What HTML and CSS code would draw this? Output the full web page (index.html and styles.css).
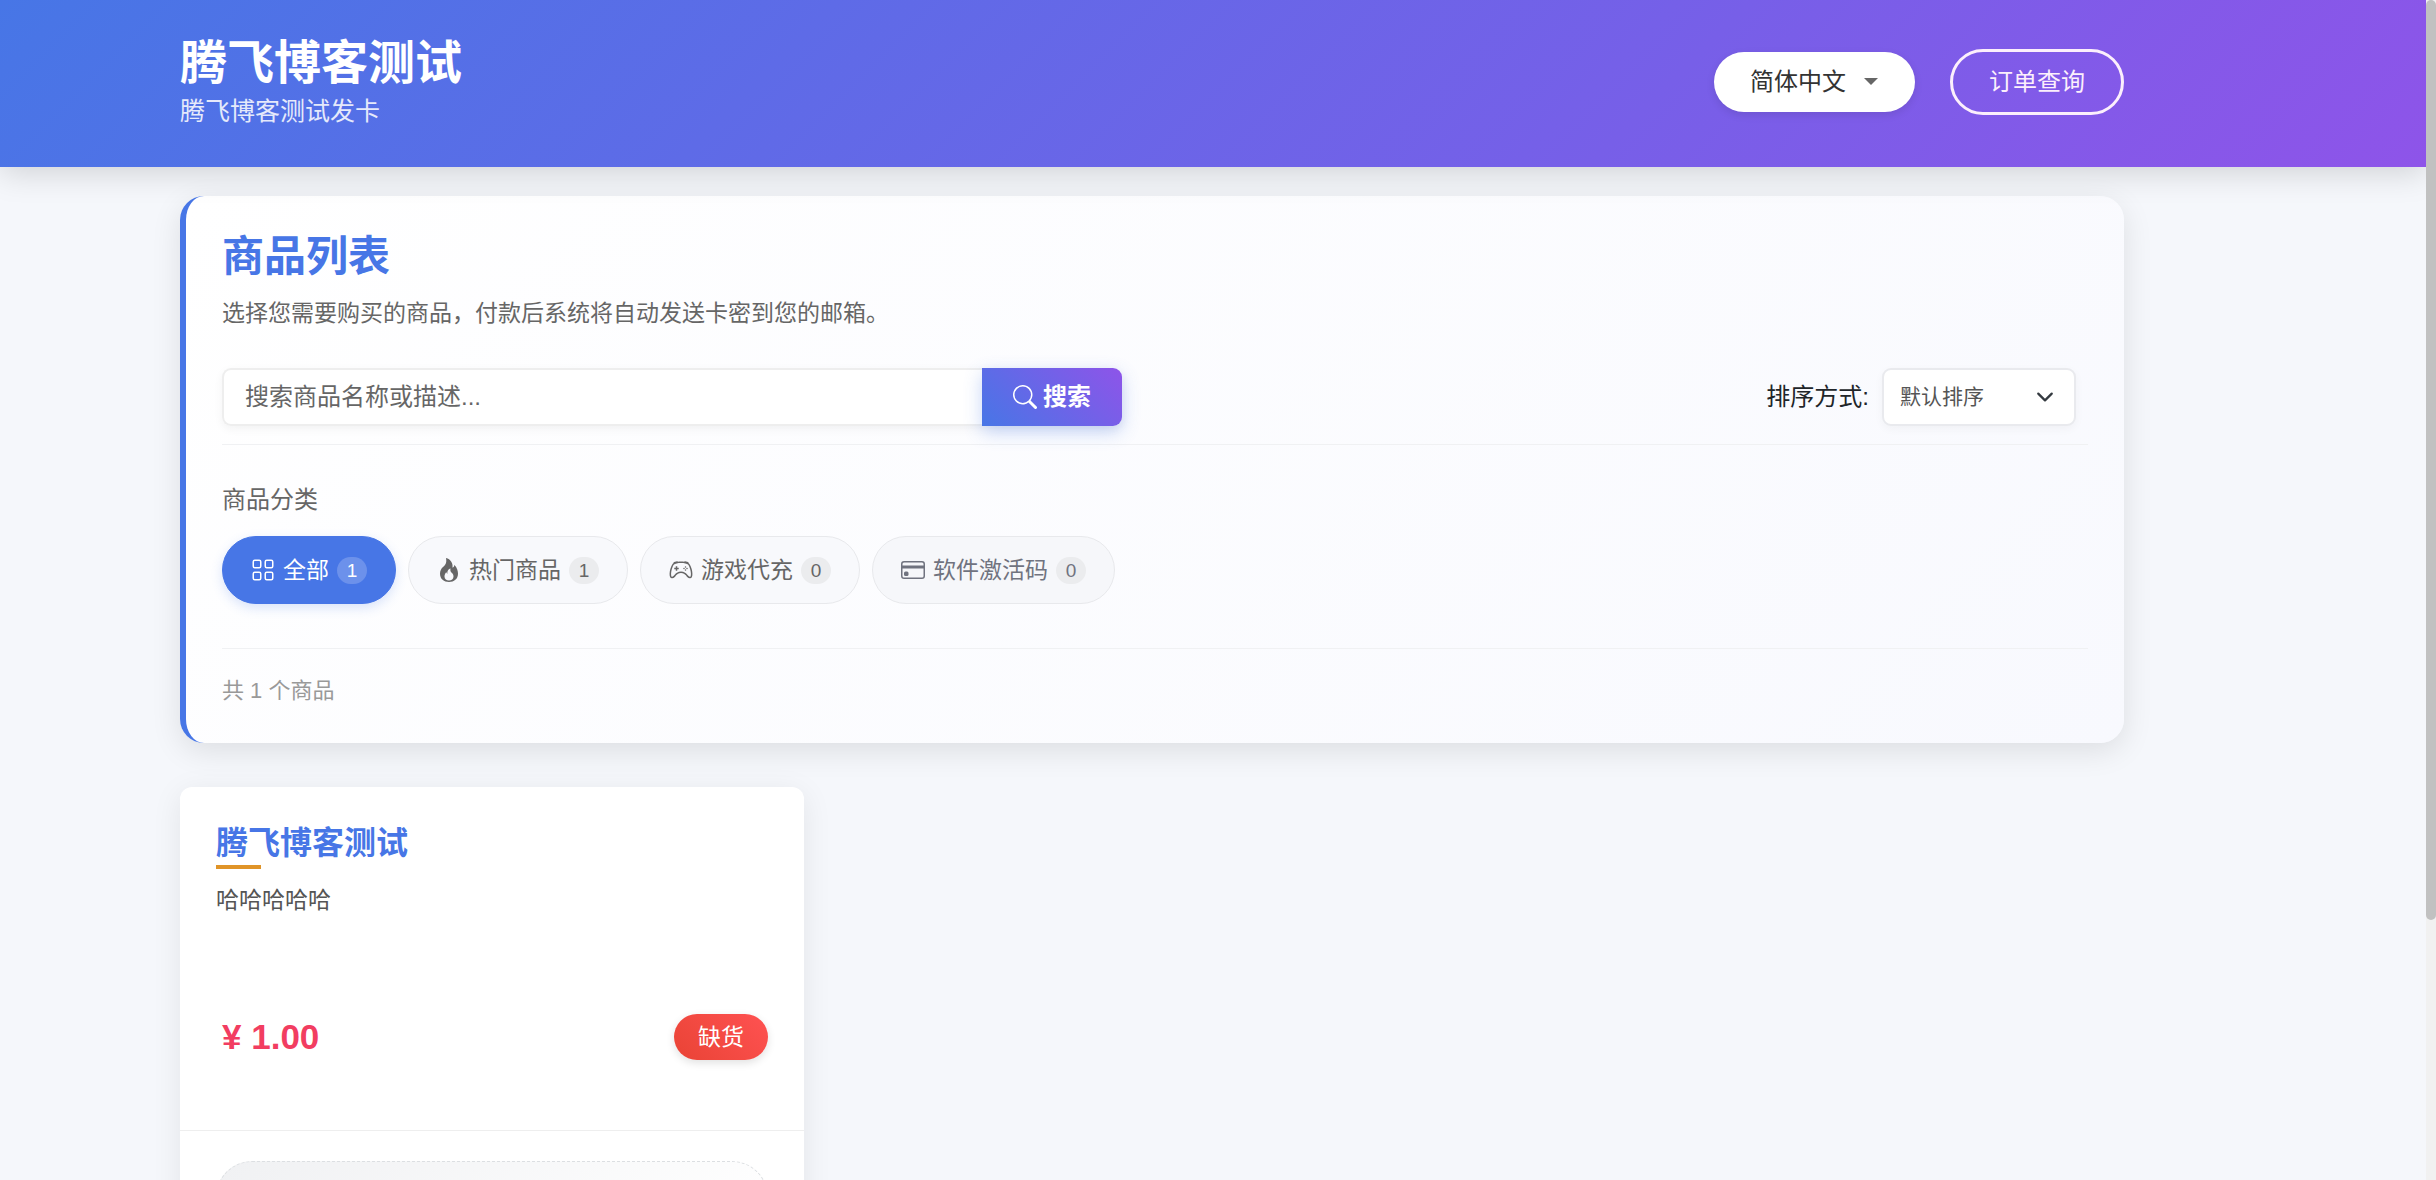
FILE: index.html
```html
<!DOCTYPE html>
<html lang="zh-CN">
<head>
    <meta charset="UTF-8">
    <title>腾飞博客测试</title>
    <link rel="stylesheet" href="styles.css">
</head>
<body>
<header class="header">
    <div class="brand">
        <h1>腾飞博客测试</h1>
        <p>腾飞博客测试发卡</p>
    </div>
    <div class="header-btns">
        <button class="lang" type="button">简体中文
            <svg class="caret" viewBox="0 0 14 7"><path d="M0 0h14L7 7z"/></svg>
        </button>
        <a class="order" href="#">订单查询</a>
    </div>
</header>

<main class="main">
    <section class="panel">
        <h2>商品列表</h2>
        <p class="desc">选择您需要购买的商品，付款后系统将自动发送卡密到您的邮箱。</p>
        <div class="tools">
            <form class="search">
                <input type="text" placeholder="搜索商品名称或描述..." aria-label="搜索商品">
                <button type="button">
                    <svg class="icon" viewBox="0 0 16 16"><path d="M11.742 10.344a6.5 6.5 0 1 0-1.397 1.398h-.001q.044.06.098.115l3.85 3.85a1 1 0 0 0 1.415-1.414l-3.85-3.85a1 1 0 0 0-.115-.1zM12 6.5a5.5 5.5 0 1 1-11 0 5.5 5.5 0 0 1 11 0"/></svg>
                    搜索
                </button>
            </form>
            <div class="sort">
                <label for="sort">排序方式:</label>
                <div class="select-box">
                    <select id="sort">
                        <option>默认排序</option>
                    </select>
                    <svg class="arrow" viewBox="0 0 16 16"><path d="M2 5l6 6 6-6"/></svg>
                </div>
            </div>
        </div>
        <div class="category">
            <p class="cate-title">商品分类</p>
            <div class="chips">
                <a class="chip active" href="#">
                    <svg class="icon line" viewBox="0 0 16 16"><rect x="1.5" y="1.5" width="5" height="5" rx="1"/><rect x="9.5" y="1.5" width="5" height="5" rx="1"/><rect x="1.5" y="9.5" width="5" height="5" rx="1"/><rect x="9.5" y="9.5" width="5" height="5" rx="1"/></svg>
                    全部<span class="num">1</span>
                </a>
                <a class="chip" href="#">
                    <svg class="icon" viewBox="0 0 16 16"><path d="M8 16c3.314 0 6-2 6-5.5 0-1.5-.5-4-2.5-6 .25 1.5-1.25 2-1.25 2C11 4 9 .5 6 0c.357 2 .5 4-2 6-1.25 1-2 2.729-2 4.5C2 14 4.686 16 8 16m0-1c-1.657 0-3-1-3-2.75 0-.75.25-2 1.25-3C6.125 10 7 10.5 7 10.5c-.375-1.25.5-3.25 2-3.5-.179 1-.25 2 1 3 .625.5 1 1.364 1 2.25C11 14 9.657 15 8 15"/></svg>
                    热门商品<span class="num">1</span>
                </a>
                <a class="chip" href="#">
                    <svg class="icon" viewBox="0 0 16 16"><path d="M11.5 6.027a.5.5 0 1 1-1 0 .5.5 0 0 1 1 0m-1.5 1.5a.5.5 0 1 0 0-1 .5.5 0 0 0 0 1m2.5-.5a.5.5 0 1 1-1 0 .5.5 0 0 1 1 0m-1.5 1.5a.5.5 0 1 0 0-1 .5.5 0 0 0 0 1m-6.5-3h1v1h1v1h-1v1h-1v-1h-1v-1h1z"/><path d="M3.051 3.26a.5.5 0 0 1 .354-.613l1.932-.518a.5.5 0 0 1 .62.39c.655-.079 1.35-.117 2.043-.117.72 0 1.443.041 2.12.126a.5.5 0 0 1 .622-.399l1.932.518a.5.5 0 0 1 .306.729q.211.136.373.297c.408.408.78 1.05 1.095 1.772.32.733.599 1.591.805 2.466s.34 1.78.364 2.606c.024.816-.059 1.602-.328 2.21a1.42 1.42 0 0 1-1.445.83c-.636-.067-1.115-.394-1.513-.773-.245-.232-.496-.526-.739-.808-.126-.148-.25-.292-.368-.423-.728-.804-1.597-1.527-3.224-1.527s-2.496.723-3.224 1.527c-.119.131-.242.275-.368.423-.243.282-.494.575-.739.808-.398.38-.877.706-1.513.773a1.42 1.42 0 0 1-1.445-.83c-.27-.608-.352-1.395-.329-2.21.024-.826.16-1.73.365-2.606.206-.875.486-1.733.805-2.466.315-.722.687-1.364 1.094-1.772a2.3 2.3 0 0 1 .433-.335l-.028-.079zm2.036.412c-.877.185-1.469.443-1.733.708-.276.276-.587.783-.885 1.465a14 14 0 0 0-.748 2.295 12.4 12.4 0 0 0-.339 2.406c-.022.755.062 1.368.243 1.776a.42.42 0 0 0 .426.24c.327-.034.61-.199.929-.502.212-.202.4-.423.615-.674.133-.156.276-.323.44-.504C4.861 9.969 5.978 9.027 8 9.027s3.139.942 3.965 1.855c.164.181.307.348.44.504.214.251.403.472.615.674.318.303.601.468.929.503a.42.42 0 0 0 .426-.241c.18-.408.265-1.02.243-1.776a12.4 12.4 0 0 0-.339-2.406 14 14 0 0 0-.748-2.295c-.298-.682-.61-1.19-.885-1.465-.264-.265-.856-.523-1.733-.708-.85-.179-1.877-.27-2.913-.27s-2.063.091-2.913.27"/></svg>
                    游戏代充<span class="num">0</span>
                </a>
                <a class="chip soft" href="#">
                    <svg class="icon" viewBox="0 0 16 16"><path d="M0 4a2 2 0 0 1 2-2h12a2 2 0 0 1 2 2v8a2 2 0 0 1-2 2H2a2 2 0 0 1-2-2zm2-1a1 1 0 0 0-1 1v1h14V4a1 1 0 0 0-1-1zm13 4H1v5a1 1 0 0 0 1 1h12a1 1 0 0 0 1-1z"/><path d="M2 10a1 1 0 0 1 1-1h1a1 1 0 0 1 1 1v1a1 1 0 0 1-1 1H3a1 1 0 0 1-1-1z"/></svg>
                    软件激活码<span class="num">0</span>
                </a>
            </div>
        </div>
        <p class="total">共 1 个商品</p>
    </section>

    <section class="goods">
        <article class="card">
            <div class="card-body">
                <h3>腾飞博客测试</h3>
                <p class="intro">哈哈哈哈哈</p>
                <div class="price-row">
                    <span class="price">¥ 1.00</span>
                    <span class="stock">缺货</span>
                </div>
            </div>
            <div class="card-foot">
                <button type="button" disabled aria-label="缺货"></button>
            </div>
        </article>
    </section>
</main>
<div class="scrollbar"><div class="thumb"></div></div>
</body>
</html>
```
FILE: styles.css
```css
*{box-sizing:border-box;}
h1,h2,h3,p{margin:0;}
body{margin:0;height:100vh;overflow:hidden;padding-right:10px;background:#f5f7fb;color:#212529;font:24px/36px "Liberation Sans","Noto Sans CJK SC",sans-serif;}
a{text-decoration:none;}
button,input,select{font:inherit;}
.icon{width:24px;height:24px;fill:currentColor;flex:none;}
.icon.line{fill:none;stroke:currentColor;}

/* 头部 */
.header{position:relative;display:flex;justify-content:space-between;align-items:center;height:167px;padding:0 302px 4px 180px;background:linear-gradient(135deg,#4776e6,#8e54e9);box-shadow:0 6px 30px rgba(0,0,0,.15);color:#fff;}
.brand h1{padding-top:2px;font-size:47px;line-height:56px;font-weight:700;}
.brand p{font-size:25px;line-height:40px;opacity:.85;}
.header-btns{display:flex;align-items:center;gap:35px;}
.lang{display:flex;align-items:center;gap:18px;height:60px;padding:0 37px 0 36px;border:0;border-radius:30px;background:#fff;color:#333;box-shadow:0 3px 8px rgba(0,0,0,.1);}
.caret{width:14px;height:7px;fill:#666;}
.order{height:66px;padding:0 36px;border:3px solid #fceffc;border-radius:33px;color:#fceffc;line-height:60px;}

/* 商品列表 */
.main{padding:29px 302px 0 180px;}
.panel{padding:36px 36px 34px;border-left:6px solid #4776e6;border-radius:24px;background:linear-gradient(135deg,#fff,#f8f9fe);box-shadow:0 8px 30px rgba(0,0,0,.1);}
.panel h2{font-size:42px;line-height:50px;color:#4776e6;}
.desc{margin-top:13px;font-size:23px;color:#666;}
.tools{display:flex;justify-content:space-between;padding:37px 12px 18px 0;border-bottom:1px solid #f0f1f3;}
.search{display:flex;width:900px;height:58px;border-radius:9px;box-shadow:0 3px 10px rgba(0,0,0,.05);}
.search input{flex:1;min-width:0;padding:0 21px;border:2px solid #eee;border-right:0;border-radius:9px 0 0 9px;background:#fff;outline:none;}
.search input::placeholder{color:#666;opacity:1;}
.search button{display:flex;align-items:center;gap:6px;padding:0 31px;border:0;border-radius:0 9px 9px 0;background:linear-gradient(45deg,#4776e6,#8e54e9);box-shadow:0 6px 18px rgba(71,118,230,.3);color:#fff;font-weight:700;}
.sort{display:flex;align-items:center;gap:13px;}
.select-box{position:relative;width:194px;}
.select-box select{width:100%;height:58px;padding:0 16px;border:2px solid #e9eaee;border-radius:9px;background:#fff;color:#555;font-size:21px;appearance:none;box-shadow:0 3px 10px rgba(0,0,0,.04);}
.arrow{position:absolute;right:22px;top:20px;width:18px;height:18px;fill:none;stroke:#343a40;stroke-width:2;stroke-linecap:round;stroke-linejoin:round;pointer-events:none;}
.category{padding:37px 0 44px;border-bottom:1px solid #f0f1f3;}
.cate-title{color:#666;}
.chips{display:flex;gap:12px;margin-top:18px;}
.chip{display:flex;align-items:center;gap:8px;height:68px;padding:0 28px;border:1px solid #e8e9ec;border-radius:34px;background:#f8f9fc;color:#666;font-size:23px;}
.chip .num{width:30px;height:27px;border-radius:14px;background:#ebecee;font-size:19px;line-height:27px;text-align:center;}
.chip.active{border-color:#4776e6;background:#4776e6;color:#fff;box-shadow:0 4px 12px rgba(71,118,230,.2);}
.chip.active .num{background:#6c91eb;}
.chip.soft{background:#f6f7fa;color:#70737f;}
.total{margin-top:24px;font-size:22px;color:#999;}

/* 商品卡片 */
.goods{display:grid;grid-template-columns:repeat(3,1fr);gap:36px;margin-top:44px;}
.card{border-radius:12px;background:#fff;box-shadow:0 6px 30px rgba(0,0,0,.08);}
.card-body{padding:36px 36px 70px;}
.card h3{font-size:32px;line-height:40px;color:#4776e6;}
.card h3::after{content:"";display:block;width:45px;height:4px;margin-top:2px;background:#e09428;}
.intro{margin-top:13px;font-size:23px;color:#555;}
.price-row{display:flex;justify-content:space-between;align-items:center;margin-top:96px;padding-left:6px;}
.price{font-size:35px;font-weight:700;color:#f23d61;}
.stock{padding:0 24px;border-radius:23px;background:linear-gradient(45deg,#e94335,#ff5252);color:#fff;font-size:23px;line-height:46px;box-shadow:0 3px 8px rgba(0,0,0,.12);}
.card-foot{padding:30px 36px 36px;border-top:1px solid #eee;}
.card-foot button{display:block;width:100%;height:72px;border:1px dashed #dcdfe2;border-radius:36px;background:linear-gradient(135deg,#f0f1f3,#fff);}

/* 滚动条 */
.scrollbar{position:fixed;top:0;right:0;width:10px;height:100%;background:#f1f1f1;}
.thumb{height:78%;border-radius:5px;background:#c1c1c1;}
```
